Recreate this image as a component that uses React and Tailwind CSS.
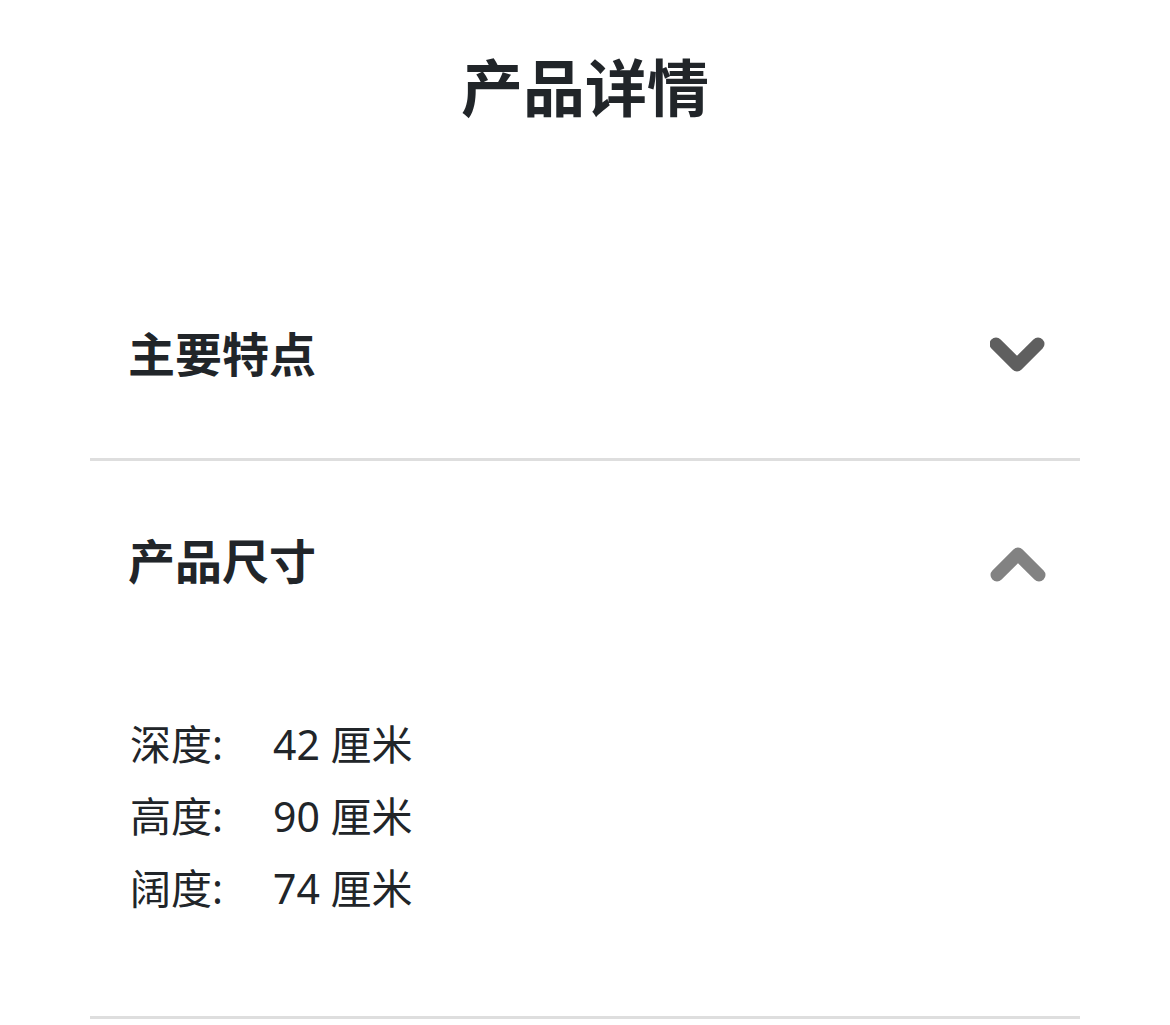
import { useState } from "react";

const sizes = [
  { label: "深度:", value: "42 厘米" },
  { label: "高度:", value: "90 厘米" },
  { label: "阔度:", value: "74 厘米" },
];

function Chevron({ open }) {
  return (
    <svg width="56" height="40" viewBox="0 0 56 40" fill="none" aria-hidden="true">
      {open ? (
        <polyline
          points="7,32 28,11 49,32"
          stroke="#828282"
          strokeWidth="13"
          strokeLinecap="round"
          strokeLinejoin="round"
        />
      ) : (
        <polyline
          points="6,8 27,29 48,8"
          stroke="#5f5f5f"
          strokeWidth="13"
          strokeLinecap="round"
          strokeLinejoin="round"
        />
      )}
    </svg>
  );
}

export default function App() {
  const [open, setOpen] = useState({ features: false, size: true });

  const toggle = (key) => setOpen((prev) => ({ ...prev, [key]: !prev[key] }));

  return (
    <div className="min-h-screen bg-white text-[#212529] font-['Noto_Sans','Noto_Sans_CJK_SC',sans-serif]">
      <h1 className="mt-[42px] text-center text-[62px] font-bold leading-[92px]">产品详情</h1>

      <section className="mx-[90px] mt-[124px]">
        <div className="border-b-[3px] border-[#dedede]">
          <button
            className="flex h-[200px] w-full items-center justify-between pb-[8px] pl-[38px] pr-[34px]"
            onClick={() => toggle("features")}
          >
            <span className="text-[47px] font-bold">主要特点</span>
            <span className="pt-[4px]">
              <Chevron open={open.features} />
            </span>
          </button>
        </div>

        <div className="border-b-[3px] border-[#dedede]">
          <button
            className="flex h-[208px] w-full items-center justify-between pb-[8px] pl-[38px] pr-[34px]"
            onClick={() => toggle("size")}
          >
            <span className="text-[47px] font-bold">产品尺寸</span>
            <span className="pt-[4px]">
              <Chevron open={open.size} />
            </span>
          </button>

          {open.size && (
            <div className="pb-[92px] pl-[40px] pt-[39px] text-[41px] leading-[72px]">
              {sizes.map((row) => (
                <div key={row.label} className="grid grid-cols-[143px_auto]">
                  <span>{row.label}</span>
                  <span>{row.value}</span>
                </div>
              ))}
            </div>
          )}
        </div>
      </section>
    </div>
  );
}
